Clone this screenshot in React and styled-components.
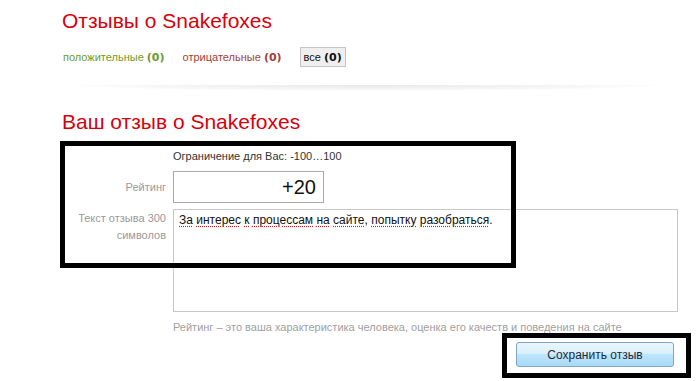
import styled, { createGlobalStyle } from 'styled-components'

const GlobalStyle = createGlobalStyle`
  html, body {
    margin: 0;
    padding: 0;
    background: #fff;
  }
  body {
    font-family: 'Liberation Sans', Arial, sans-serif;
    width: 700px;
    height: 381px;
    overflow: hidden;
  }
`

const Page = styled.div`
  position: relative;
  width: 700px;
  height: 381px;
  padding: 0 0 0 62px;
  box-sizing: border-box;
`

const Title = styled.h1`
  margin: 0;
  font-size: 21px;
  font-weight: 400;
  color: #d8000c;
  line-height: 24px;
  padding-top: ${(p) => p.$top || 0}px;
`

const Filters = styled.div`
  display: flex;
  align-items: center;
  gap: 18px;
  margin-top: 14px;
  height: 20px;
  font-size: 11px;
  padding-left: 1px;
`

const FilterLink = styled.span`
  color: ${(p) => p.$color};
  b {
    font-family: 'DejaVu Sans', Verdana, sans-serif;
    font-size: 11px;
  }
`

const FilterButton = styled.span`
  display: flex;
  align-items: center;
  height: 18px;
  padding: 0 3px 0 3px;
  border: 1px solid #c4c4c4;
  background: #efefef;
  color: #111;
  b {
    font-family: 'DejaVu Sans', Verdana, sans-serif;
    margin-left: 3px;
  }
`

const Divider = styled.div`
  margin: 18px 35px 0 8px;
  height: 6px;
  background: radial-gradient(ellipse at 50% 0%, rgba(0, 0, 0, 0.09) 0%, rgba(0, 0, 0, 0.03) 55%, rgba(255, 255, 255, 0) 72%);
`

const Form = styled.div`
  display: grid;
  grid-template-columns: 104px 505px;
  column-gap: 7px;
  row-gap: 6px;
  margin-top: 16px;
  font-size: 11px;
`

const Label = styled.div`
  color: #9a9a9a;
  text-align: right;
  line-height: 17px;
  padding-top: ${(p) => p.$pad || 0}px;
`

const Limit = styled.div`
  grid-column: 2;
  color: #333;
  margin-bottom: 3px;
`

const RatingInput = styled.div`
  width: 151px;
  height: 32px;
  box-sizing: border-box;
  border: 1px solid #a9a9a9;
  text-align: right;
  padding: 0 7px;
  font-size: 20px;
  line-height: 30px;
  color: #111;
`

const TextArea = styled.div`
  height: 103px;
  box-sizing: border-box;
  border: 1px solid #c8c8c8;
  padding: 2px 5px;
  font-size: 12px;
  line-height: 17px;
  color: #111;
`

const Word = styled.span`
  text-decoration: underline dotted #e02020;
  text-underline-offset: 2px;
`

const Hint = styled.div`
  grid-column: 2;
  color: #a0a0a0;
  margin-top: 3px;
`

const Actions = styled.div`
  grid-column: 2;
  display: flex;
  justify-content: flex-end;
  padding-right: 4px;
  margin-top: 3px;
`

const SaveButton = styled.button`
  width: 158px;
  height: 25px;
  border: 1px solid #7fa6cc;
  border-radius: 3px;
  background: linear-gradient(#eaf6fd, #d9f0fc 45%, #bee6fd 50%, #a7d9f5);
  font-family: 'Liberation Sans', Arial, sans-serif;
  font-size: 12px;
  color: #1e2a3a;
  padding: 0;
`

const Frame = styled.div`
  position: absolute;
  border: 5px solid #000;
  box-sizing: border-box;
  pointer-events: none;
`

const words = ['За', 'интерес', 'к', 'процессам', 'на', 'сайте', ',', 'попытку', 'разобраться', '.']

const App = () => {
  return (
    <Page>
      <GlobalStyle />
      <Title $top={9}>Отзывы о Snakefoxes</Title>
      <Filters>
        <FilterLink $color="#6f9a2a">
          положительные <b>(0)</b>
        </FilterLink>
        <FilterLink $color="#a3413a">
          отрицательные <b>(0)</b>
        </FilterLink>
        <FilterButton>
          все <b>(0)</b>
        </FilterButton>
      </Filters>
      <Divider />
      <Title $top={19}>Ваш отзыв о Snakefoxes</Title>
      <Form>
        <Limit>Ограничение для Вас: -100…100</Limit>
        <Label $pad={8}>Рейтинг</Label>
        <RatingInput>+20</RatingInput>
        <Label $pad={1}>Текст отзыва 300 символов</Label>
        <TextArea>
          {words.map((w, i) =>
            w === ',' || w === '.' ? (
              <span key={i}>{w}</span>
            ) : (
              <span key={i}>
                {i > 0 ? ' ' : ''}
                <Word>{w}</Word>
              </span>
            )
          )}
        </TextArea>
        <Hint>Рейтинг – это ваша характеристика человека, оценка его качеств и поведения на сайте</Hint>
        <Actions>
          <SaveButton>Сохранить отзыв</SaveButton>
        </Actions>
      </Form>
      <Frame style={{ left: 60, top: 141, width: 456, height: 127 }} />
      <Frame style={{ left: 502, top: 333, width: 189, height: 45 }} />
    </Page>
  )
}

export default App
